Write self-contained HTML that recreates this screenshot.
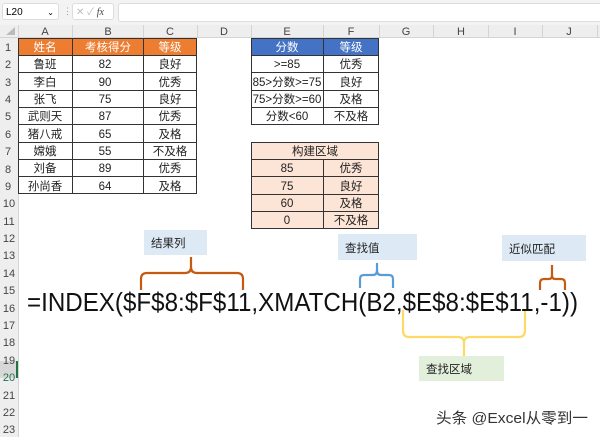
<!DOCTYPE html>
<html><head><meta charset="utf-8"><style>
body{margin:0;width:600px;height:437px;overflow:hidden;background:#fff;font-family:"Liberation Sans","Noto Sans CJK SC",sans-serif;position:relative}
.a{position:absolute}
</style></head><body>
<div class="a" style="left:0;top:0;width:600px;height:25px;background:#f3f3f3"></div>
<div class="a" style="left:2px;top:3px;width:57px;height:17px;background:#fff;border:1px solid #ddd;border-radius:3px;font-size:10px;line-height:17px;padding-left:3px;box-sizing:border-box">L20<span style="position:absolute;right:4px;font-size:8px">⌄</span></div>
<div class="a" style="left:63px;top:6px;font-size:9px;color:#999">⋮</div>
<div class="a" style="left:72px;top:3px;width:42px;height:17px;background:#fff;border:1px solid #ddd;border-radius:3px;font-size:10px;line-height:17px;color:#bbb;padding-left:3px;box-sizing:border-box">✕ ✓ <i style="color:#444;font-family:'Liberation Serif'">fx</i></div>
<div class="a" style="left:118px;top:3px;width:490px;height:17px;background:#fff;border:1px solid #ddd;border-radius:3px"></div>
<svg class="a" style="left:0;top:25px" width="600" height="412">
<rect x="0" y="0" width="600" height="12" fill="#eee"/>
<rect x="0" y="0" width="18" height="412" fill="#eee"/>
<rect x="0" y="336" width="18" height="17" fill="#d7d7d7"/>
<line x1="17" y1="336" x2="17" y2="353" stroke="#217346" stroke-width="2"/>
<polygon points="6,10 15,10 15,2" fill="#bbb"/>
<g stroke="#d4d4d4" stroke-width="1">
<line x1="18.5" y1="0" x2="18.5" y2="412"/>
<line x1="72.5" y1="0" x2="72.5" y2="12"/><line x1="143.5" y1="0" x2="143.5" y2="12"/><line x1="197.5" y1="0" x2="197.5" y2="12"/><line x1="251.5" y1="0" x2="251.5" y2="12"/><line x1="323.5" y1="0" x2="323.5" y2="12"/><line x1="379.5" y1="0" x2="379.5" y2="12"/><line x1="433.5" y1="0" x2="433.5" y2="12"/><line x1="488.5" y1="0" x2="488.5" y2="12"/><line x1="542.5" y1="0" x2="542.5" y2="12"/><line x1="597.5" y1="0" x2="597.5" y2="12"/>
<line x1="0" y1="12.5" x2="600" y2="12.5"/>
</g>
<g font-size="11" fill="#444" text-anchor="middle" font-family="Liberation Sans">
<text x="45" y="10">A</text><text x="108" y="10">B</text><text x="170" y="10">C</text><text x="224" y="10">D</text><text x="287" y="10">E</text><text x="351" y="10">F</text><text x="406" y="10">G</text><text x="461" y="10">H</text><text x="515" y="10">I</text><text x="569" y="10">J</text>
</g>
<g font-size="11" fill="#444" text-anchor="middle" font-family="Liberation Sans">
<text x="8" y="26">1</text><text x="8" y="43">2</text><text x="8" y="61">3</text><text x="8" y="78">4</text><text x="8" y="95">5</text><text x="8" y="113">6</text><text x="8" y="130">7</text><text x="8" y="148">8</text><text x="8" y="165">9</text><text x="9" y="182">10</text><text x="9" y="200">11</text><text x="9" y="217">12</text><text x="9" y="234">13</text><text x="9" y="252">14</text><text x="9" y="269">15</text><text x="9" y="287">16</text><text x="9" y="304">17</text><text x="9" y="321">18</text><text x="9" y="339">19</text><text x="9" y="356" fill="#217346">20</text><text x="9" y="374">21</text><text x="9" y="391">22</text><text x="9" y="408">23</text>
</g>
</svg>
<svg class="a" style="left:0;top:0" width="600" height="437" font-family="Liberation Sans,Noto Sans CJK SC,sans-serif" font-size="11.5" text-anchor="middle">
<rect x="18" y="38" width="179" height="17" fill="#ed7d31"/>
<g fill="#fff"><text x="45" y="51">姓名</text><text x="108" y="51">考核得分</text><text x="170" y="51">等级</text></g>
<g stroke="#333" stroke-width="1" fill="none">
<rect x="18.5" y="38.5" width="178" height="155"/>
<line x1="72.5" y1="38" x2="72.5" y2="194"/><line x1="143.5" y1="38" x2="143.5" y2="194"/>
<line x1="18" y1="55.5" x2="197" y2="55.5"/><line x1="18" y1="72.5" x2="197" y2="72.5"/><line x1="18" y1="90.5" x2="197" y2="90.5"/><line x1="18" y1="107.5" x2="197" y2="107.5"/><line x1="18" y1="124.5" x2="197" y2="124.5"/><line x1="18" y1="142.5" x2="197" y2="142.5"/><line x1="18" y1="159.5" x2="197" y2="159.5"/><line x1="18" y1="176.5" x2="197" y2="176.5"/>
</g>
<g fill="#222">
<text x="45" y="68">鲁班</text><text x="105" y="68">82</text><text x="170" y="68">良好</text>
<text x="45" y="86">李白</text><text x="105" y="86">90</text><text x="170" y="86">优秀</text>
<text x="45" y="103">张飞</text><text x="105" y="103">75</text><text x="170" y="103">良好</text>
<text x="45" y="120">武则天</text><text x="105" y="120">87</text><text x="170" y="120">优秀</text>
<text x="45" y="138">猪八戒</text><text x="105" y="138">65</text><text x="170" y="138">及格</text>
<text x="45" y="155">嫦娥</text><text x="105" y="155">55</text><text x="170" y="155">不及格</text>
<text x="45" y="172">刘备</text><text x="105" y="172">89</text><text x="170" y="172">优秀</text>
<text x="45" y="190">孙尚香</text><text x="105" y="190">64</text><text x="170" y="190">及格</text>
</g>
<rect x="251" y="38" width="128" height="17" fill="#4472c4"/>
<g fill="#fff"><text x="287" y="51">分数</text><text x="351" y="51">等级</text></g>
<g stroke="#333" fill="none"><rect x="251.5" y="38.5" width="127" height="86"/><line x1="323.5" y1="38" x2="323.5" y2="125"/>
<line x1="251" y1="55.5" x2="379" y2="55.5"/><line x1="251" y1="72.5" x2="379" y2="72.5"/><line x1="251" y1="90.5" x2="379" y2="90.5"/><line x1="251" y1="107.5" x2="379" y2="107.5"/></g>
<g fill="#222">
<text x="287" y="68">&gt;=85</text><text x="351" y="68">优秀</text>
<text x="287" y="86">85&gt;分数&gt;=75</text><text x="351" y="86">良好</text>
<text x="287" y="103">75&gt;分数&gt;=60</text><text x="351" y="103">及格</text>
<text x="287" y="120">分数&lt;60</text><text x="351" y="120">不及格</text>
</g>
<rect x="251" y="142" width="128" height="87" fill="#fce4d6"/>
<g stroke="#333" fill="none"><rect x="251.5" y="142.5" width="127" height="86"/><line x1="323.5" y1="159" x2="323.5" y2="229"/>
<line x1="251" y1="159.5" x2="379" y2="159.5"/><line x1="251" y1="176.5" x2="379" y2="176.5"/><line x1="251" y1="194.5" x2="379" y2="194.5"/><line x1="251" y1="211.5" x2="379" y2="211.5"/></g>
<g fill="#222">
<text x="315" y="155">构建区域</text>
<text x="287" y="172">85</text><text x="351" y="172">优秀</text>
<text x="287" y="190">75</text><text x="351" y="190">良好</text>
<text x="287" y="207">60</text><text x="351" y="207">及格</text>
<text x="287" y="224">0</text><text x="351" y="224">不及格</text>
</g>
<rect x="144" y="230" width="63" height="25" fill="#dde9f5"/>
<rect x="338" y="234" width="79" height="26" fill="#dde9f5"/>
<rect x="502" y="235" width="84" height="26" fill="#dde9f5"/>
<rect x="419" y="356" width="85" height="25" fill="#e2efda"/>
<g fill="#222" font-size="11.5" text-anchor="start">
<text x="151" y="247">结果列</text><text x="345" y="252">查找值</text><text x="509" y="253">近似匹配</text><text x="426" y="373">查找区域</text>
</g>
<g fill="none" stroke-width="2.2" stroke-linejoin="round">
<path d="M141,290 V279 Q141,273 147,273 H185 Q191,273 191,267 V257 M191,267 Q191,273 197,273 H237 Q243,273 243,279 V290" stroke="#c55a11"/>
<path d="M360,288 V279 Q360,275 364,275 H373 Q377,275 377,270 V263 M377,270 Q377,275 381,275 H389 Q393,275 393,279 V288" stroke="#5b9bd5"/>
<path d="M540,290 V283 Q540,279 544,279 H549 Q552,279 552,275 V265 M552,275 Q552,279 555,279 H561 Q565,279 565,283 V290" stroke="#c55a11"/>
<path d="M403,310 V330 Q403,337 409,337 H458 Q464,337 464,343 V356 M464,343 Q464,337 470,337 H519 Q525,337 525,330 V310" stroke="#ffd966"/>
</g>
<text x="27" y="311" font-size="26" fill="#111" text-anchor="start" textLength="551" lengthAdjust="spacingAndGlyphs">=INDEX($F$8:$F$11,XMATCH(B2,$E$8:$E$11,-1))</text>
<text x="436" y="423" font-size="15" fill="#333" text-anchor="start" textLength="152" lengthAdjust="spacingAndGlyphs">头条 @Excel从零到一</text>
</svg>
</body></html>
